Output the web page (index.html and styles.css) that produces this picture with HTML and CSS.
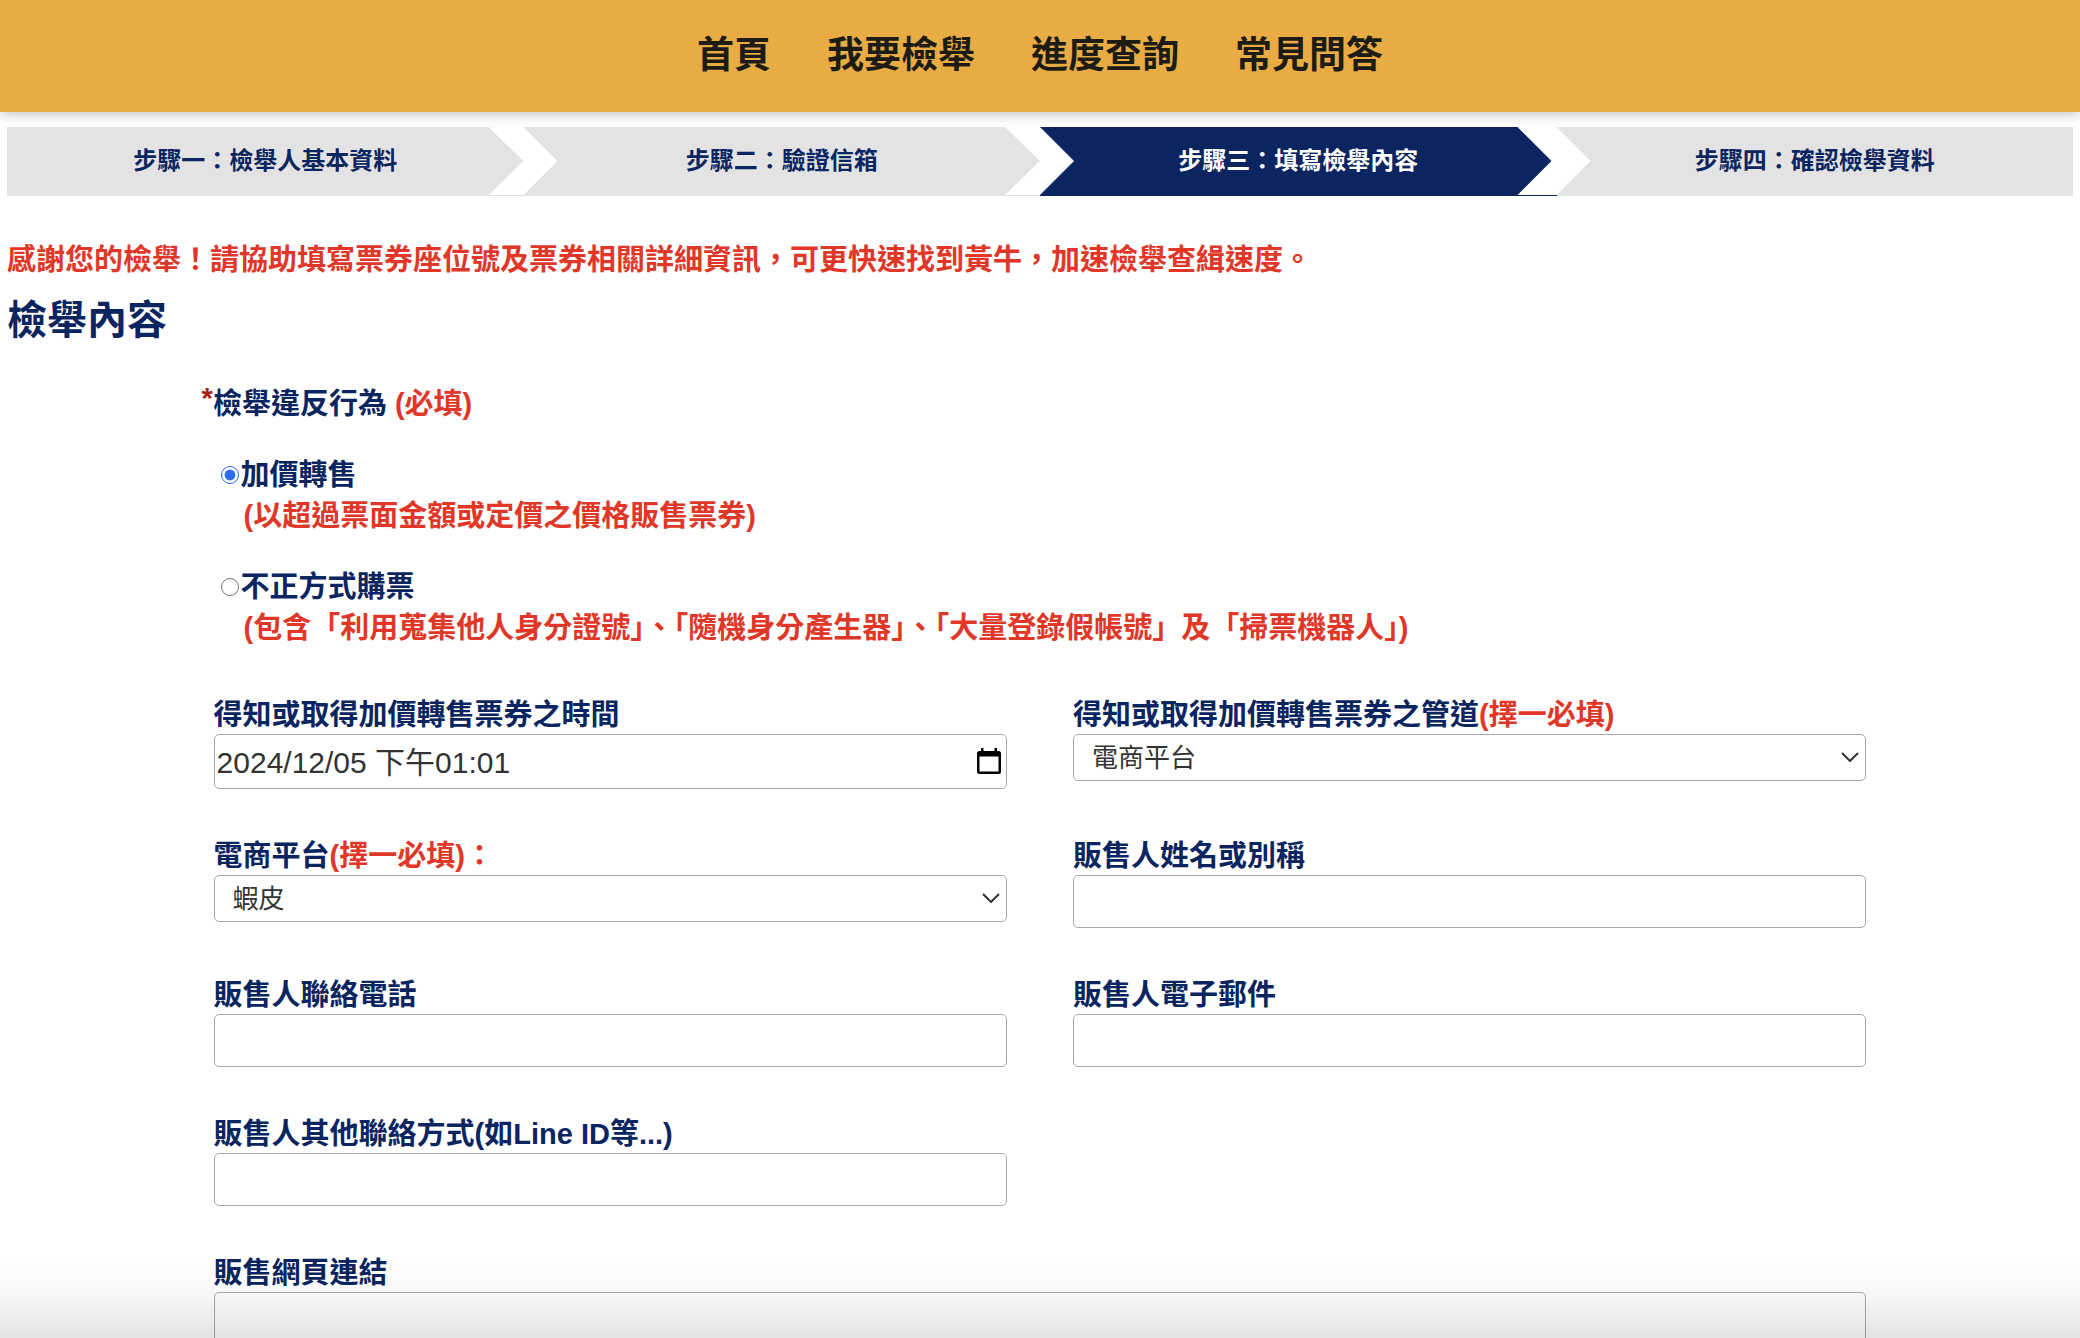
FILE: index.html
```html
<!DOCTYPE html>
<html lang="zh-Hant-TW">
<head>
<meta charset="utf-8">
<meta name="viewport" content="width=device-width, initial-scale=1">
<title>檢舉內容</title>
<link rel="stylesheet" href="styles.css">
</head>
<body>
<header class="site-header">
  <nav class="site-nav">
    <a href="#">首頁</a>
    <a href="#">我要檢舉</a>
    <a href="#">進度查詢</a>
    <a href="#">常見問答</a>
  </nav>
</header>
<main class="page">
  <ol class="steps">
    <li class="step step-first"><span class="step-label">步驟一：檢舉人基本資料</span></li>
    <li class="step"><span class="step-label">步驟二：驗證信箱</span></li>
    <li class="step step-current" aria-current="step"><span class="step-label">步驟三：填寫檢舉內容</span></li>
    <li class="step step-last"><span class="step-label">步驟四：確認檢舉資料</span></li>
  </ol>
  <p class="notice">感謝您的檢舉！請協助填寫票券座位號及票券相關詳細資訊，可更快速找到黃牛，加速檢舉查緝速度。</p>
  <h1 class="title">檢舉內容</h1>
  <form class="report">
    <fieldset class="violation">
      <legend class="violation-title"><span class="star">*</span>檢舉違反行為 <span class="hint">(必填)</span></legend>
      <div class="option">
        <label class="option-name"><input class="radio" type="radio" name="violation" checked>加價轉售</label>
        <p class="option-note">(以超過票面金額或定價之價格販售票券)</p>
      </div>
      <div class="option">
        <label class="option-name"><input class="radio" type="radio" name="violation">不正方式購票</label>
        <p class="option-note">(包含「利用蒐集他人身分證號」、「隨機身分產生器」、「大量登錄假帳號」及「掃票機器人」)</p>
      </div>
    </fieldset>
    <div class="fields">
      <div class="field">
        <label for="time">得知或取得加價轉售票券之時間</label>
        <div class="control">
          <input class="box box-date" id="time" type="text" value="2024/12/05 下午01:01">
          <svg class="icon-calendar" viewBox="0 0 24 26" aria-hidden="true"><path fill="#000" fill-rule="evenodd" d="M4 0h2.500v3h11V0H20v3h1.500a2.500 2.500 0 0 1 2.500 2.500v18a2.500 2.500 0 0 1-2.500 2.500h-19A2.500 2.500 0 0 1 0 23.500v-18A2.500 2.500 0 0 1 2.500 3H4zM2.500 8.500v15h19v-15z"/></svg>
        </div>
      </div>
      <div class="field">
        <label for="channel">得知或取得加價轉售票券之管道<span class="hint">(擇一必填)</span></label>
        <div class="control">
          <select class="box box-select" id="channel"><option>電商平台</option></select>
          <svg class="icon-chevron" viewBox="0 0 18 10" aria-hidden="true"><path fill="none" stroke="#333" stroke-width="2" d="M1 1l8 8 8-8"/></svg>
        </div>
      </div>
      <div class="field">
        <label for="platform">電商平台<span class="hint">(擇一必填)：</span></label>
        <div class="control">
          <select class="box box-select" id="platform"><option>蝦皮</option></select>
          <svg class="icon-chevron" viewBox="0 0 18 10" aria-hidden="true"><path fill="none" stroke="#333" stroke-width="2" d="M1 1l8 8 8-8"/></svg>
        </div>
      </div>
      <div class="field">
        <label for="seller">販售人姓名或別稱</label>
        <input class="box" id="seller" type="text">
      </div>
      <div class="field">
        <label for="phone">販售人聯絡電話</label>
        <input class="box" id="phone" type="tel">
      </div>
      <div class="field">
        <label for="email">販售人電子郵件</label>
        <input class="box" id="email" type="email">
      </div>
      <div class="field">
        <label for="other">販售人其他聯絡方式(如Line ID等...)</label>
        <input class="box" id="other" type="text">
      </div>
      <div class="field field-wide">
        <label for="link">販售網頁連結</label>
        <input class="box" id="link" type="url">
      </div>
    </div>
  </form>
</main>
<div class="bottom-shade"></div>
</body>
</html>
```
FILE: styles.css
```css
* {
  box-sizing: border-box;
}

body {
  margin: 0;
  background: #fff;
  color: #0b2560;
  font-family: "Liberation Sans", "Noto Sans CJK TC", sans-serif;
  font-size: 29px;
  font-weight: 500;
  overflow-x: hidden;
}

.site-header {
  padding: 28px 16px;
  background: #e9ac45;
  box-shadow: 0 2px 12px rgba(0, 0, 0, 0.25);
}

.site-nav {
  display: flex;
  justify-content: center;
  gap: 56px;
  font-size: 37px;
  line-height: 56px;
}

.site-nav a {
  color: #1d1c14;
  font-weight: 700;
  text-decoration: none;
}

.page {
  padding: 15px 7px 0;
}

.steps {
  display: grid;
  grid-template-columns: repeat(4, 1fr);
  margin: 0;
  padding: 0;
  list-style: none;
}

.step {
  border-bottom: 1px solid #e3e3e3;
  font-size: 24px;
  font-weight: 700;
  line-height: 68px;
  text-align: center;
}

.step-label {
  display: block;
  background: #e3e3e3;
  clip-path: polygon(0 0, calc(100% - 35px) 0, 100% 50%, calc(100% - 35px) 100%, 0 100%, 34px 50%);
}

.step-first .step-label {
  clip-path: polygon(0 0, calc(100% - 35px) 0, 100% 50%, calc(100% - 35px) 100%, 0 100%);
}

.step-last .step-label {
  clip-path: polygon(0 0, 100% 0, 100% 100%, 0 100%, 34px 50%);
}

.step-current {
  border-color: #0b2560;
}

.step-current .step-label {
  background: #0b2560;
  color: #fff;
  clip-path: polygon(0 0, calc(100% - 39px) 0, calc(100% - 5px) 50%, calc(100% - 39px) 100%, 0 100%, 34px 50%);
}

.notice {
  margin: 43px 0 0;
  color: #e13728;
  font-weight: 700;
  line-height: 42px;
}

.title {
  margin: 9px 0 0;
  font-size: 40px;
  line-height: 60px;
}

.report {
  width: 80%;
  margin: 34px auto 0;
}

.violation {
  min-width: 0;
  margin: 0;
  padding: 0;
  border: 0;
  font-weight: 700;
  line-height: 41px;
}

.violation-title {
  margin-left: -12px;
  padding: 0;
}

.star {
  color: #a8201a;
  line-height: 1;
  vertical-align: 6px;
}

.hint {
  color: #e13728;
}

.option {
  margin-top: 30px;
  padding-left: 7px;
}

.option-name {
  display: flex;
  align-items: center;
  gap: 2px;
}

.radio {
  width: 18px;
  height: 18px;
  margin: 0 0 2px;
  accent-color: #2b6cf0;
}

.option-note {
  margin: 0;
  padding-left: 23px;
  color: #e13728;
}

.fields {
  display: grid;
  grid-template-columns: 1fr 1fr;
  gap: 49px 4%;
  align-items: start;
  margin-top: 48px;
}

.field-wide {
  grid-column: 1 / -1;
}

.field label {
  display: block;
  font-weight: 700;
  line-height: 37px;
}

.control {
  position: relative;
}

.box {
  display: block;
  width: 100%;
  height: 53px;
  padding: 0 18px;
  border: 1px solid #aaa;
  border-radius: 5px;
  background: #fff;
  color: #333;
  font: 400 26px "Liberation Sans", "Noto Sans CJK TC", sans-serif;
}

.box-date {
  height: 55px;
  padding: 0 2px 4px;
  font-size: 30px;
}

.box-select {
  height: 47px;
  appearance: none;
}

.icon-calendar {
  position: absolute;
  top: 14px;
  right: 6px;
  width: 24px;
  height: 26px;
}

.icon-chevron {
  position: absolute;
  top: 18px;
  right: 7px;
  width: 18px;
  height: 10px;
}

.bottom-shade {
  position: fixed;
  right: 0;
  bottom: 0;
  left: 0;
  height: 80px;
  background: linear-gradient(rgba(0, 0, 0, 0), rgba(0, 0, 0, 0.03) 45%, rgba(0, 0, 0, 0.11));
  pointer-events: none;
}
```
